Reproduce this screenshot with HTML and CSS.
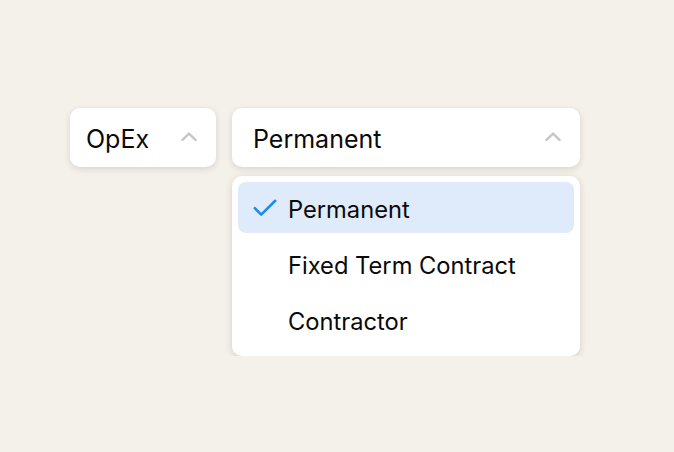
FILE: index.html
```html
<!DOCTYPE html>
<html>
<head>
<meta charset="utf-8">
<link rel="stylesheet" href="styles.css">
</head>
<body>
<div class="wrap">
  <div class="select small">
    <span class="label">OpEx</span>
    <svg class="chev" width="16" height="9" viewBox="0 0 16 9"><path d="M1.5 7.8 L8 1.6 L14.5 7.8" fill="none" stroke="#c6c6c6" stroke-width="2.4" stroke-linecap="round" stroke-linejoin="round"/></svg>
  </div>
  <div class="col">
    <div class="select big">
      <span class="label">Permanent</span>
      <svg class="chev" width="16" height="9" viewBox="0 0 16 9"><path d="M1.5 7.8 L8 1.6 L14.5 7.8" fill="none" stroke="#c6c6c6" stroke-width="2.4" stroke-linecap="round" stroke-linejoin="round"/></svg>
    </div>
    <div class="menu">
      <div class="opt selected">
        <svg class="check" width="24" height="18" viewBox="0 0 24 18"><path d="M1.8 9.2 L8.2 15.6 L22.2 1.8" fill="none" stroke="#1a8cf0" stroke-width="2.6" stroke-linecap="round" stroke-linejoin="round"/></svg>
        <span>Permanent</span>
      </div>
      <div class="opt"><span class="spacer"></span><span>Fixed Term Contract</span></div>
      <div class="opt"><span class="spacer"></span><span>Contractor</span></div>
    </div>
  </div>
</div>
</body>
</html>
```
FILE: styles.css
```css
html, body {
  margin: 0;
  padding: 0;
  background: #f4f0ea;
  font-family: Inter, "Noto Sans", sans-serif;
  color: #0a0a0a;
}
.wrap {
  display: flex;
  align-items: flex-start;
  gap: 16px;
  padding: 108px 0 0 70px;
}
.select {
  background: #fff;
  border-radius: 10px;
  height: 59px;
  box-sizing: border-box;
  display: flex;
  align-items: center;
  justify-content: space-between;
  box-shadow: 0 2px 6px rgba(60, 45, 20, 0.14);
  font-size: 25px;
}
.small {
  width: 146px;
  padding: 0 19px 0 16px;
}
.big {
  width: 348px;
  padding: 0 19px 0 21px;
}
.label {
  line-height: 1;
  padding-top: 3px;
}
.chev {
  display: block;
  margin-top: -2px;
}
.col {
  display: flex;
  flex-direction: column;
  gap: 9px;
}
.menu {
  background: #fff;
  border-radius: 10px;
  box-shadow: 0 2px 7px rgba(60, 45, 20, 0.16);
  padding: 6px 6px 11px;
  display: flex;
  flex-direction: column;
  gap: 5px;
  width: 348px;
  box-sizing: border-box;
}
.opt {
  height: 51px;
  border-radius: 8px;
  display: flex;
  align-items: center;
  gap: 11px;
  padding: 4px 15px 0;
  box-sizing: border-box;
  font-size: 23.7px;
  line-height: 1;
}
.selected {
  background: #dfeafb;
}
.check {
  display: block;
  margin-top: -4px;
}
.spacer {
  width: 24px;
  flex: none;
}
```
